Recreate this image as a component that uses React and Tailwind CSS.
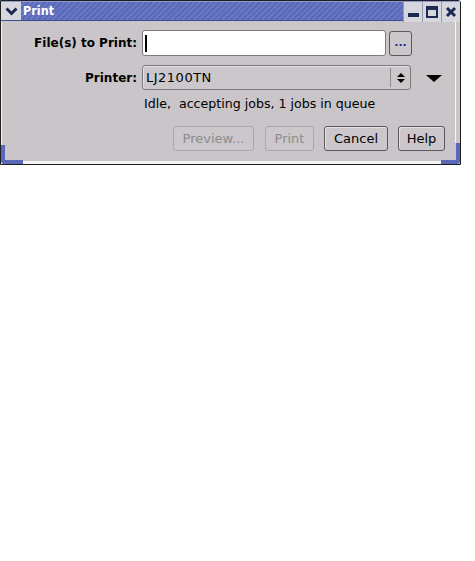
import React from 'react'

const font = { fontFamily: '"DejaVu Sans", Verdana, sans-serif' }
const titleFont = { fontFamily: '"DejaVu Sans Condensed", "DejaVu Sans", sans-serif' }

function TitleButton({ children }) {
    return (
        <div className="w-[19px] h-[20px] bg-[#d6d6de] border-l border-[#9a9aa8] flex items-center justify-center">
            {children}
        </div>
    )
}

function DialogButton({ label, disabled, width }) {
    return (
        <button
            className={`h-[25px] ${width} rounded-[3px] border text-[13px] bg-[#cbc7cb] ${disabled
                ? 'border-[#aaa6aa] text-[#8e8c8e]'
                : 'border-[#5a585a] text-black shadow-[inset_1px_1px_0_#e4e2e4]'}`}>
            {label}
        </button>
    )
}

export default function App() {
    return (
        <div className="w-[475px] h-[561px] bg-white" style={font}>
            <div className="w-[461px] h-[165px] border border-[#1e1e1e] rounded-tr-[3px] flex flex-col bg-[#c9c5c9] relative">
                {/* title bar */}
                <div className="h-[20px] flex items-stretch border-t border-b border-t-[#8e9ad8] border-b-[#3e4c96] bg-[repeating-linear-gradient(135deg,#6978c4_0px,#6978c4_2px,#5969b6_2px,#5969b6_4px)]">
                    <div className="w-[20px] bg-[#d6d6de] flex items-center justify-center">
                        <svg width="13" height="9" viewBox="0 0 13 9">
                            <path d="M1.5 1.5 L6.5 6.5 L11.5 1.5" stroke="#1c2a52" strokeWidth="3" fill="none" />
                        </svg>
                    </div>
                    <span className="pl-[2px] text-white font-bold text-[12.5px] leading-[18px]" style={titleFont}>Print</span>
                    <div className="flex-1" />
                    <TitleButton>
                        <div className="w-[11px] h-[4px] bg-[#1c2a52] mt-[6px]" />
                    </TitleButton>
                    <TitleButton>
                        <div className="w-[12px] h-[12px] border-2 border-t-4 border-[#1c2a52]" />
                    </TitleButton>
                    <TitleButton>
                        <svg width="12" height="12" viewBox="0 0 12 12">
                            <path d="M2 2 L10 10 M10 2 L2 10" stroke="#1c2a52" strokeWidth="3" />
                        </svg>
                    </TitleButton>
                </div>

                {/* body */}
                <div className="flex-1 border-l border-[#f4f4f4] pt-[9px] text-[13px] text-black">
                    <div className="flex items-center h-[26px]">
                        <div className="w-[137px] text-right font-bold text-[12px] pr-[2px]">File(s) to Print:</div>
                        <div className="w-[244px] h-[26px] ml-[3px] bg-white border border-[#7c7a7c] rounded-[3px] flex items-center pl-[2px]">
                            <div className="w-[2px] h-[17px] bg-black" />
                        </div>
                        <button className="ml-[3px] w-[23px] h-[25px] rounded-[3px] border border-[#5a585a] bg-[#cbc7cb] text-[#1c2a8c] text-[11px] font-bold leading-none pb-[2px]">...</button>
                    </div>

                    <div className="flex items-center h-[25px] mt-[9px]">
                        <div className="w-[137px] text-right font-bold text-[12px] pr-[2px]">Printer:</div>
                        <div className="w-[269px] h-[25px] ml-[3px] border border-[#7c7a7c] rounded-[3px] bg-[#cbc7cb] flex items-center shadow-[inset_1px_1px_0_#e4e2e4]">
                            <span className="flex-1 pl-[3px] tracking-[0.5px]">LJ2100TN</span>
                            <div className="w-px h-[19px] bg-[#8e8c8e]" />
                            <div className="w-[19px] flex items-center justify-center">
                                <svg width="8" height="12" viewBox="0 0 8 12">
                                    <path d="M0 5 L4 1 L8 5 Z M0 7 L4 11 L8 7 Z" fill="#000" />
                                </svg>
                            </div>
                        </div>
                        <svg className="ml-[15px] mt-[1px]" width="16" height="7" viewBox="0 0 16 7">
                            <path d="M0 0 L16 0 L8 7 Z" fill="#000" />
                        </svg>
                    </div>

                    <div className="pl-[142px] mt-[6px] leading-[16px] text-[12.6px]">Idle,&nbsp; accepting jobs, 1 jobs in queue</div>

                    <div className="flex justify-end pr-[15px] mt-[14px]">
                        <DialogButton label="Preview..." disabled width="w-[81px]" />
                        <div className="w-[11px]" />
                        <DialogButton label="Print" disabled width="w-[49px]" />
                        <div className="w-[10px]" />
                        <DialogButton label="Cancel" width="w-[64px]" />
                        <div className="w-[10px]" />
                        <DialogButton label="Help" width="w-[47px]" />
                    </div>
                </div>

                {/* bottom edge with blue corners */}
                <div className="absolute left-0 bottom-0 w-[22px] h-[19px] border-l-[4px] border-b-[4px] border-[#5a68b8] rounded-bl-[4px]" />
                <div className="absolute right-0 bottom-0 w-[19px] h-[21px] border-r-[4px] border-b-[4px] border-[#5a68b8] rounded-br-[4px]" />
                <div className="absolute left-[22px] right-[19px] bottom-0 h-[3px] bg-[#f4f4f4]" />
                <div className="absolute right-[4px] top-[20px] bottom-[21px] w-px bg-[#f4f4f4]" />
            </div>
        </div>
    )
}
